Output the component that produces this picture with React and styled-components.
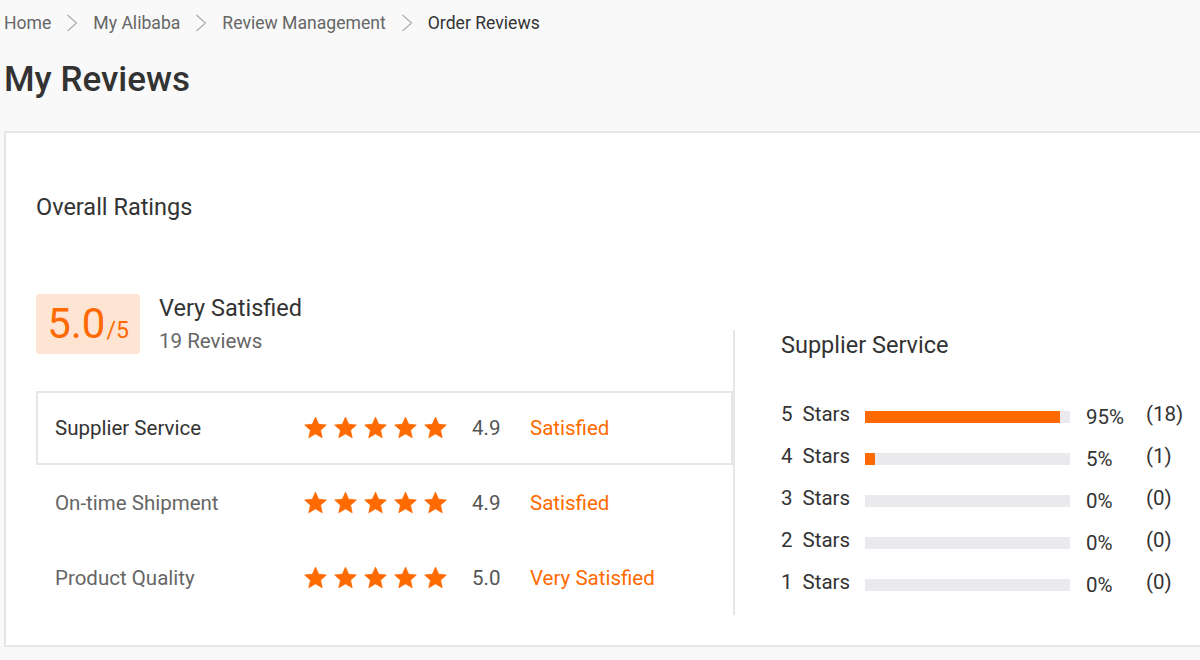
import React from "react";
import styled, { createGlobalStyle } from "styled-components";

const GlobalStyle = createGlobalStyle`
  html, body { margin: 0; padding: 0; }
  body {
    background: #f9f9f9;
    font-family: Roboto, "Liberation Sans", Arial, sans-serif;
    color: #333;
    overflow: hidden;
    width: 1200px;
    height: 660px;
  }
`;

const ORANGE = "#ff6a00";

const Page = styled.div`
  padding-left: 4px;
`;

const Crumbs = styled.nav`
  display: flex;
  align-items: center;
  height: 46px;
  font-size: 17.6px;
  color: #666;
`;

const Crumb = styled.span`
  color: ${(p) => (p.$current ? "#333" : "#666")};
`;

const Sep = styled.span`
  display: inline-flex;
  margin: 0 15px;
  color: #a8a8b0;
`;

const Title = styled.h1`
  margin: 0;
  font-size: 35px;
  font-weight: 500;
  line-height: 40px;
  padding-top: 14px;
  color: #333;
`;

const Card = styled.section`
  margin-top: 31px;
  width: 1240px;
  box-sizing: border-box;
  background: #fff;
  border: 2px solid #e6e6e6;
  padding: 60px 30px 30px 30px;
`;

const SectionTitle = styled.h2`
  margin: 0;
  font-size: 23.5px;
  font-weight: 400;
  line-height: 28px;
  color: #333;
`;

const Body = styled.div`
  display: flex;
  align-items: flex-end;
  margin-top: 73px;
`;

const LeftCol = styled.div`
  width: 697px;
  display: flex;
  flex-direction: column;
`;

const Summary = styled.div`
  display: flex;
  align-items: flex-start;
  gap: 19px;
  margin-bottom: 37px;
`;

const ScoreBox = styled.div`
  width: 104px;
  height: 60px;
  box-sizing: border-box;
  background: #fee4d3;
  border-radius: 4px;
  display: flex;
  align-items: baseline;
  justify-content: center;
  padding-top: 4px;
  color: ${ORANGE};
`;

const ScoreBig = styled.span`
  font-size: 42px;
  line-height: 52px;
`;

const ScoreSmall = styled.span`
  font-size: 23px;
  margin-left: 1px;
`;

const SummaryText = styled.div`
  display: flex;
  flex-direction: column;
`;

const Verdict = styled.div`
  font-size: 23.5px;
  line-height: 28px;
  color: #333;
`;

const Count = styled.div`
  margin-top: 7px;
  font-size: 20.5px;
  line-height: 24px;
  color: #666;
`;

const RatingRow = styled.div`
  display: grid;
  grid-template-columns: 248px 169px 58px 1fr;
  align-items: center;
  height: ${(p) => (p.$active ? "74px" : "75px")};
  box-sizing: border-box;
  padding-left: ${(p) => (p.$active ? "17px" : "19px")};
  border: ${(p) => (p.$active ? "2px solid #e6e6e6" : "none")};
  background: #fff;
`;

const RowLabel = styled.span`
  font-size: 20.5px;
  color: ${(p) => (p.$active ? "#333" : "#666")};
`;

const Stars = styled.span`
  display: flex;
  gap: 5px;
`;

const RowScore = styled.span`
  font-size: 20.5px;
  color: #555;
`;

const RowStatus = styled.span`
  font-size: 20.5px;
  color: ${ORANGE};
`;

const RightCol = styled.div`
  flex: 1;
  height: 285px;
  box-sizing: border-box;
  border-left: 2px solid #e6e6e6;
  padding-left: 46px;
`;

const PanelTitle = styled.h3`
  margin: 0 0 33px 0;
  font-size: 23.5px;
  font-weight: 400;
  line-height: 30px;
  color: #333;
`;

const BarRow = styled.div`
  display: grid;
  grid-template-columns: 84px 205px 76px auto;
  align-items: center;
  height: 42px;
  font-size: 20.5px;
  color: #333;
`;

const BarLabel = styled.span`
  display: flex;
`;

const BarNum = styled.span`
  margin-right: 10px;
`;

const Track = styled.div`
  height: 12px;
  margin-top: 6px;
  background: #e9e9ee;
`;

const Fill = styled.div`
  height: 100%;
  background: ${ORANGE};
`;

const Percent = styled.span`
  margin-top: 6px;
  padding-left: 16px;
`;

const Tally = styled.span``;

const Star = () => (
  <svg width="25" height="24" viewBox="0 0 24 24">
    <path
      d="M12 1.2l3.15 7.05 7.65.75-5.8 5.150 1.7 7.55L12 17.8l-6.7 3.9 1.7-7.55L1.2 9l7.65-.75z"
      fill={ORANGE}
      stroke={ORANGE}
      strokeWidth="0.8"
      strokeLinejoin="round"
    />
  </svg>
);

const Chevron = () => (
  <svg width="12" height="18" viewBox="0 0 12 18">
    <path d="M1.5 1l9 8-9 8" fill="none" stroke="currentColor" strokeWidth="1.1" />
  </svg>
);

const crumbs = ["Home", "My Alibaba", "Review Management", "Order Reviews"];

const ratings = [
  { label: "Supplier Service", score: "4.9", status: "Satisfied", active: true },
  { label: "On-time Shipment", score: "4.9", status: "Satisfied" },
  { label: "Product Quality", score: "5.0", status: "Very Satisfied" },
];

const dist = [
  { n: 5, pct: 95, count: 18 },
  { n: 4, pct: 5, count: 1 },
  { n: 3, pct: 0, count: 0 },
  { n: 2, pct: 0, count: 0 },
  { n: 1, pct: 0, count: 0 },
];

export default function App() {
  return (
    <>
      <GlobalStyle />
      <Page>
        <Crumbs>
          {crumbs.map((c, i) => (
            <React.Fragment key={c}>
              {i > 0 && (
                <Sep>
                  <Chevron />
                </Sep>
              )}
              <Crumb $current={i === crumbs.length - 1}>{c}</Crumb>
            </React.Fragment>
          ))}
        </Crumbs>
        <Title>My Reviews</Title>
        <Card>
          <SectionTitle>Overall Ratings</SectionTitle>
          <Body>
            <LeftCol>
              <Summary>
                <ScoreBox>
                  <ScoreBig>5.0</ScoreBig>
                  <ScoreSmall>/5</ScoreSmall>
                </ScoreBox>
                <SummaryText>
                  <Verdict>Very Satisfied</Verdict>
                  <Count>19 Reviews</Count>
                </SummaryText>
              </Summary>
              {ratings.map((r) => (
                <RatingRow key={r.label} $active={r.active}>
                  <RowLabel $active={r.active}>{r.label}</RowLabel>
                  <Stars>
                    {[0, 1, 2, 3, 4].map((i) => (
                      <Star key={i} />
                    ))}
                  </Stars>
                  <RowScore>{r.score}</RowScore>
                  <RowStatus>{r.status}</RowStatus>
                </RatingRow>
              ))}
            </LeftCol>
            <RightCol>
              <PanelTitle>Supplier Service</PanelTitle>
              {dist.map((d) => (
                <BarRow key={d.n}>
                  <BarLabel>
                    <BarNum>{d.n}</BarNum>Stars
                  </BarLabel>
                  <Track>
                    <Fill style={{ width: `${d.pct}%` }} />
                  </Track>
                  <Percent>{d.pct}%</Percent>
                  <Tally>({d.count})</Tally>
                </BarRow>
              ))}
            </RightCol>
          </Body>
        </Card>
      </Page>
    </>
  );
}
